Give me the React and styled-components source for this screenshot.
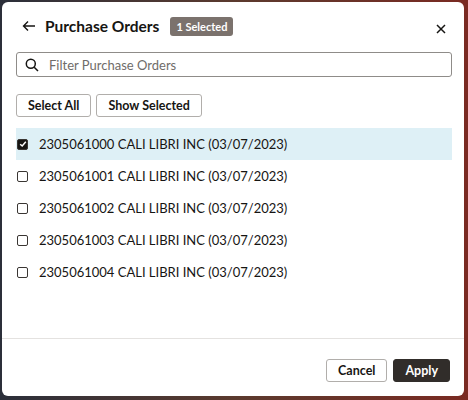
import React, { useState } from 'react';
import styled, { createGlobalStyle } from 'styled-components';

const Global = createGlobalStyle`
  html, body { margin: 0; padding: 0; background: #3a2e2a; }
  body { font-family: Lato, "Noto Sans", sans-serif; color: #161513; }
  * { box-sizing: border-box; }
`;

const Backdrop = styled.div`
  width: 468px;
  height: 400px;
  padding: 2px 4px 4px 2px;
  background: linear-gradient(90deg, #2b2f3a 0%, #5b3a2e 50%, #7a2a22 100%);
`;

const Dialog = styled.div`
  height: 100%;
  background: #fff;
  border-radius: 6px;
  display: flex;
  flex-direction: column;
  overflow: hidden;
`;

const Body = styled.div`
  flex: 1;
  padding: 12px 12px 0 14px;
  display: flex;
  flex-direction: column;
`;

const Header = styled.div`
  display: flex;
  align-items: center;
  height: 24px;
  padding-left: 6px;
`;

const Title = styled.h1`
  margin: 0 0 0 9px;
  font-size: 15.5px;
  font-weight: 700;
`;

const Badge = styled.span`
  margin-left: 11px;
  background: #7b726d;
  color: #fff;
  font-size: 11px;
  font-weight: 700;
  padding: 3px 6px;
  border-radius: 3px;
`;

const IconBtn = styled.button`
  border: 0;
  background: none;
  padding: 0;
  display: flex;
  cursor: pointer;
  margin-left: ${p => (p.$right ? 'auto' : '0')};
  margin-right: ${p => (p.$right ? '6px' : '0')};
  margin-top: ${p => (p.$right ? '6px' : '0')};
`;

const Search = styled.label`
  margin-top: 14px;
  height: 25px;
  border: 1px solid #8f8c89;
  border-radius: 3px;
  display: flex;
  align-items: center;
  padding: 0 8px;
  gap: 8px;
`;

const SearchInput = styled.input`
  border: 0;
  outline: none;
  flex: 1;
  font: inherit;
  font-size: 13px;
  color: #161513;
  &::placeholder { color: #6f6c69; }
`;

const ButtonRow = styled.div`
  display: flex;
  gap: 5px;
  margin-top: 17px;
`;

const Btn = styled.button`
  height: 23px;
  padding: 0 11px;
  font: inherit;
  font-size: 12.5px;
  font-weight: 700;
  border-radius: 3px;
  border: 1px solid ${p => (p.$primary ? '#312d2a' : '#b1aeab')};
  background: ${p => (p.$primary ? '#312d2a' : '#fff')};
  color: ${p => (p.$primary ? '#fff' : '#161513')};
  cursor: pointer;
`;

const List = styled.div`
  margin-top: 11px;
  display: flex;
  flex-direction: column;
`;

const Row = styled.label`
  height: 32px;
  display: flex;
  align-items: center;
  gap: 11px;
  padding-left: 1px;
  font-size: 13px;
  background: ${p => (p.$selected ? '#def0f6' : 'transparent')};
  cursor: pointer;
`;

const Box = styled.span`
  width: 11px;
  height: 11px;
  border: 1px solid #3a3633;
  border-radius: 2px;
  background: ${p => (p.$checked ? '#161513' : '#fff')};
  display: flex;
  align-items: center;
  justify-content: center;
`;

const Footer = styled.div`
  border-top: 1px solid #e4e2e0;
  height: 58px;
  display: flex;
  justify-content: flex-end;
  align-items: center;
  gap: 6px;
  padding: 6px 14px 0 0;
`;

const orders = [0, 1, 2, 3, 4].map(i => `230506100${i} CALI LIBRI INC (03/07/2023)`);

export default function App() {
  const [sel, setSel] = useState([0]);
  const toggle = i => setSel(s => (s.includes(i) ? s.filter(x => x !== i) : [...s, i]));
  return (
    <Backdrop>
      <Global />
      <Dialog>
        <Body>
          <Header>
            <IconBtn aria-label="Back">
              <svg width="14" height="12" viewBox="0 0 14 12" fill="none" stroke="#161513" strokeWidth="1.4">
                <path d="M13 6H1.5M6 1.5L1.5 6 6 10.5" />
              </svg>
            </IconBtn>
            <Title>Purchase Orders</Title>
            <Badge>{sel.length} Selected</Badge>
            <IconBtn $right aria-label="Close">
              <svg width="10" height="10" viewBox="0 0 10 10" stroke="#161513" strokeWidth="1.5">
                <path d="M1 1l8 8M9 1l-8 8" />
              </svg>
            </IconBtn>
          </Header>
          <Search>
            <svg width="14" height="14" viewBox="0 0 14 14" fill="none" stroke="#161513" strokeWidth="1.5">
              <circle cx="5.8" cy="5.8" r="4.5" />
              <path d="M9.2 9.2L13 13" />
            </svg>
            <SearchInput placeholder="Filter Purchase Orders" />
          </Search>
          <ButtonRow>
            <Btn onClick={() => setSel(orders.map((_, i) => i))}>Select All</Btn>
            <Btn>Show Selected</Btn>
          </ButtonRow>
          <List>
            {orders.map((o, i) => {
              const on = sel.includes(i);
              return (
                <Row key={o} $selected={on} onClick={() => toggle(i)}>
                  <Box $checked={on}>
                    {on && (
                      <svg width="8" height="8" viewBox="0 0 8 8" fill="none" stroke="#fff" strokeWidth="1.5">
                        <path d="M1.2 4.2L3.2 6 6.8 1.8" />
                      </svg>
                    )}
                  </Box>
                  {o}
                </Row>
              );
            })}
          </List>
        </Body>
        <Footer>
          <Btn>Cancel</Btn>
          <Btn $primary>Apply</Btn>
        </Footer>
      </Dialog>
    </Backdrop>
  );
}
